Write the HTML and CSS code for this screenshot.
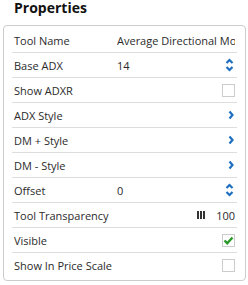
FILE: index.html
```
<!DOCTYPE html>
<html lang="en">
<head>
    <meta charset="UTF-8">
    <meta name="viewport" content="width=device-width, initial-scale=1.0">
    <title>Properties</title>
    <link rel="stylesheet" href="styles.css">
</head>
<body>
    <h1 class="title">Properties</h1>
    <div class="panel">
        <div class="row">
            <span class="label">Tool Name</span>
            <span class="value">Average Directional Movement</span>
        </div>
        <div class="row">
            <span class="label">Base ADX</span>
            <span class="value">14</span>
            <svg class="stepper" width="9" height="14" viewBox="0 0 9 14">
                <polyline points="1.5,5 4.5,2 7.5,5" />
                <polyline points="1.5,9 4.5,12 7.5,9" />
            </svg>
        </div>
        <div class="row">
            <span class="label">Show ADXR</span>
            <span class="value"></span>
            <span class="check"></span>
        </div>
        <div class="row">
            <span class="label">ADX Style</span>
            <span class="value"></span>
            <svg class="chevron" width="6" height="10" viewBox="0 0 6 10">
                <polyline points="1.5,1.5 4.5,5 1.5,8.5" />
            </svg>
        </div>
        <div class="row">
            <span class="label">DM + Style</span>
            <span class="value"></span>
            <svg class="chevron" width="6" height="10" viewBox="0 0 6 10">
                <polyline points="1.5,1.5 4.5,5 1.5,8.5" />
            </svg>
        </div>
        <div class="row">
            <span class="label">DM - Style</span>
            <span class="value"></span>
            <svg class="chevron" width="6" height="10" viewBox="0 0 6 10">
                <polyline points="1.5,1.5 4.5,5 1.5,8.5" />
            </svg>
        </div>
        <div class="row">
            <span class="label">Offset</span>
            <span class="value">0</span>
            <svg class="stepper" width="9" height="14" viewBox="0 0 9 14">
                <polyline points="1.5,5 4.5,2 7.5,5" />
                <polyline points="1.5,9 4.5,12 7.5,9" />
            </svg>
        </div>
        <div class="row">
            <span class="label wide">Tool Transparency</span>
            <span class="bars"><i></i><i></i><i></i></span>
            <span class="amount">100</span>
        </div>
        <div class="row">
            <span class="label">Visible</span>
            <span class="value"></span>
            <span class="check">
                <svg width="11" height="11" viewBox="0 0 11 11">
                    <polyline points="1.5,5.5 4.2,8.2 9.5,2.5" />
                </svg>
            </span>
        </div>
        <div class="row">
            <span class="label wide">Show In Price Scale</span>
            <span class="value"></span>
            <span class="check"></span>
        </div>
    </div>
</body>
</html>
```

FILE: styles.css
```
body {
    margin: 0;
    padding: 0 2px 0 3px;
    font-family: "Open Sans", Arial, sans-serif;
    font-size: 11px;
    color: #2b2b2b;
    background: #fff;
}
.title {
    margin: 0 0 0 11px;
    height: 25px;
    font-size: 14px;
    line-height: 15px;
    font-weight: bold;
    color: #111;
}
.panel {
    border: 1px solid #ccc;
    border-radius: 4px;
    padding: 2px 8px 3px 8px;
}
.row {
    display: flex;
    align-items: center;
    height: 24px;
    padding: 0 2px;
    border-bottom: 1px solid #ddd;
}
.row:last-child {
    border-bottom: none;
}
.label {
    flex: 0 0 103px;
    white-space: nowrap;
}
.label.wide {
    flex: 1;
}
.value {
    flex: 1;
    white-space: nowrap;
    overflow: hidden;
}
.stepper polyline,
.chevron polyline {
    fill: none;
    stroke: #1e6fc0;
    stroke-width: 2.2;
}
.stepper {
    margin-right: 1px;
}
.chevron {
    margin-right: 1px;
}
.check {
    width: 11px;
    height: 11px;
    border: 1px solid #ccc;
    background: #fff;
    display: flex;
}
.check polyline {
    fill: none;
    stroke: #2a9a2a;
    stroke-width: 2.4;
}
.bars {
    display: flex;
    gap: 1px;
    margin-right: 11px;
}
.bars i {
    width: 2px;
    height: 8px;
    background: #333;
}
.amount {
    color: #2b2b2b;
}
```
